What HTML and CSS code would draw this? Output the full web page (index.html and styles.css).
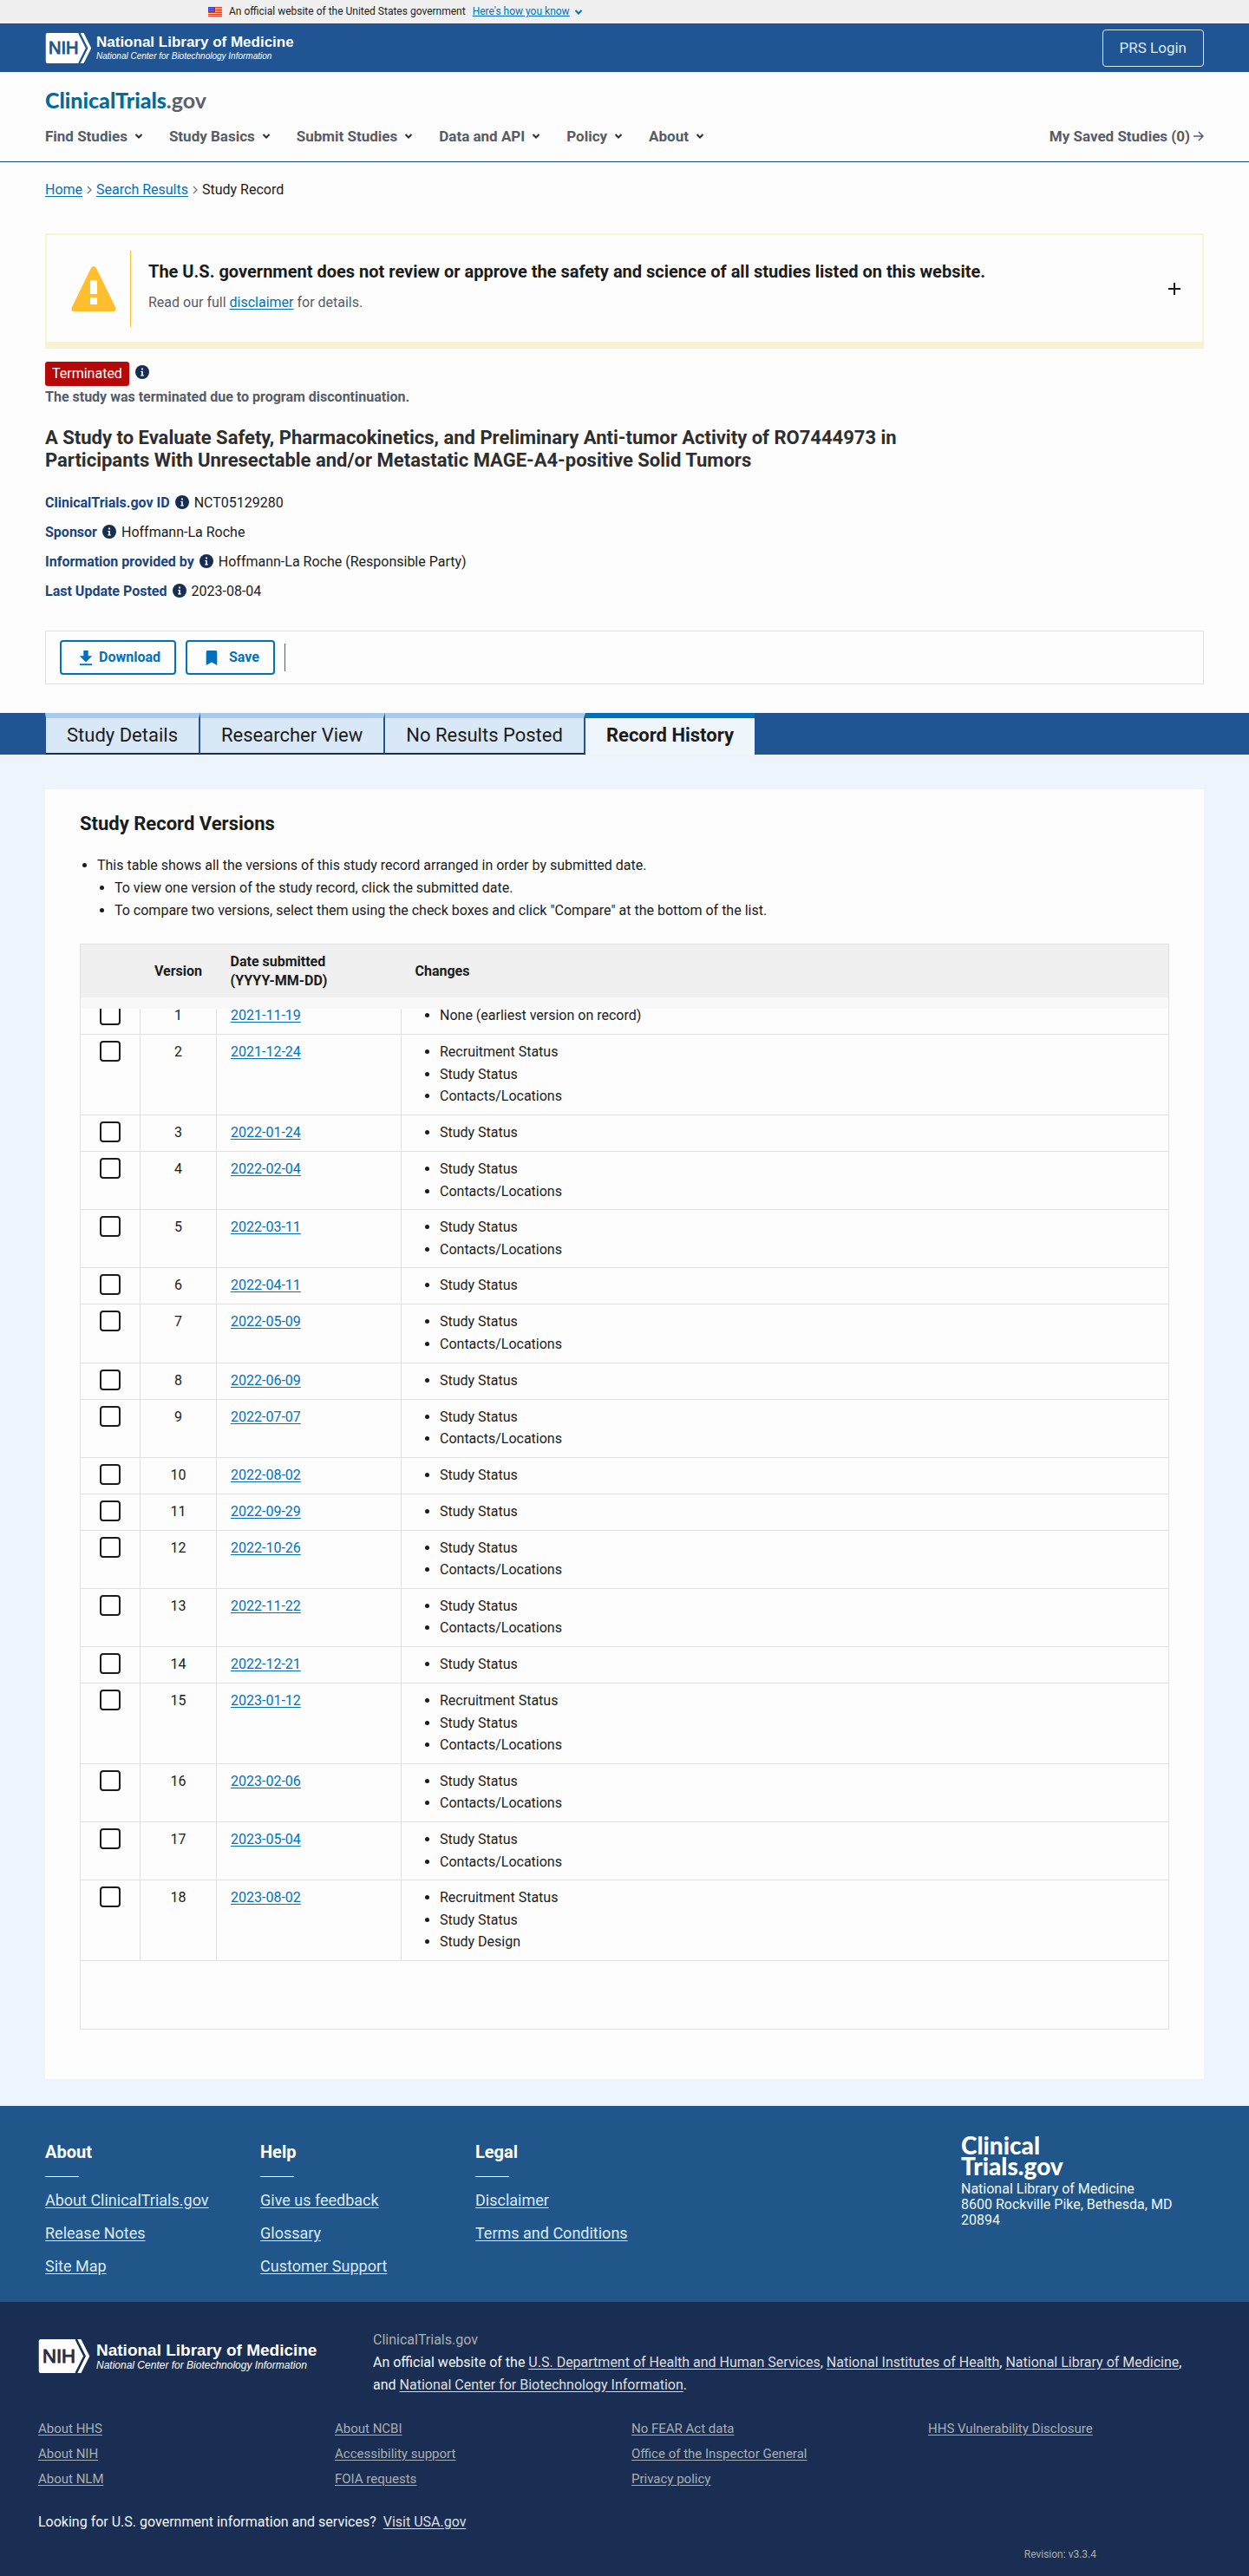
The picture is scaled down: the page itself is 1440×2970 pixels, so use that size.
FILE: index.html
```html
<!DOCTYPE html>
<html lang="en">
<head>
    <meta charset="UTF-8">
    <meta name="viewport" content="width=device-width, initial-scale=1.0">
    <title>Record History | ClinicalTrials.gov</title>
    <link rel="stylesheet" href="styles.css">
</head>
<body>
    <!-- shared icons -->
    <svg class="sprite" aria-hidden="true">
        <symbol id="chevron" viewBox="0 0 10 10"><path d="M1.5 3l3.5 3.5L8.5 3" fill="none" stroke="currentColor" stroke-width="2"/></symbol>
        <symbol id="crumb" viewBox="0 0 6 10"><path d="M1 1l4 4-4 4" fill="none" stroke="currentColor" stroke-width="1.3"/></symbol>
        <symbol id="info" viewBox="0 0 16 16"><circle cx="8" cy="8" r="8" fill="#162e51"/><path d="M6.3 7h2.5v4.3h1v1.1H6.2v-1.1h1V8.1h-.9zM7.1 3.5h1.8v1.9H7.1z" fill="#fff"/></symbol>
        <symbol id="nih" viewBox="0 0 54 36">
            <path d="M2 0h37l10 18-10 18H2a2 2 0 0 1-2-2V2a2 2 0 0 1 2-2z" fill="#fff"/>
            <path d="M41 0h4l9 18-9 18h-4l9-18z" fill="#fff"/>
            <path d="M39.5 0L48.5 18l-9 18" fill="none" stroke="currentColor" stroke-width="2"/>
        </symbol>
    </svg>

    <div class="gov-banner">
        <svg class="flag" viewBox="0 0 16 11"><path fill="#fff" d="M0 0h16v11H0z"/><path d="M0 .5h16M0 2.5h16M0 4.5h16M0 6.5h16M0 8.5h16M0 10.5h16" stroke="#db3e1f"/><path fill="#3a45c0" d="M0 0h8v6H0z"/><path d="M1 1.5h6M1 3h6M1 4.5h6" stroke="#8f96e0" stroke-width=".7" stroke-dasharray="1 1"/></svg>
        <span>An official website of the United States government</span>
        <button type="button" class="gov-banner-btn"><span>Here's how you know</span><svg class="chevron"><use href="#chevron"/></svg></button>
    </div>

    <header>
        <div class="nlm-bar">
            <a class="nlm-logo" href="#">
                <span class="nih"><svg><use href="#nih"/></svg><b>NIH</b></span>
                <span class="nlm-text"><strong>National Library of Medicine</strong><em>National Center for Biotechnology Information</em></span>
            </a>
            <a class="login" href="#">PRS Login</a>
        </div>
        <div class="site-header">
            <a class="site-logo" href="#">ClinicalTrials<span>.gov</span></a>
            <nav class="main-nav">
                <button type="button">Find Studies <svg class="chevron"><use href="#chevron"/></svg></button>
                <button type="button">Study Basics <svg class="chevron"><use href="#chevron"/></svg></button>
                <button type="button">Submit Studies <svg class="chevron"><use href="#chevron"/></svg></button>
                <button type="button">Data and API <svg class="chevron"><use href="#chevron"/></svg></button>
                <button type="button">Policy <svg class="chevron"><use href="#chevron"/></svg></button>
                <button type="button">About <svg class="chevron"><use href="#chevron"/></svg></button>
                <a class="saved" href="#">My Saved Studies (0)<svg viewBox="0 0 12 12"><path d="M0 6h11M6 1l5 5-5 5" fill="none" stroke="currentColor" stroke-width="1.5"/></svg></a>
            </nav>
        </div>
    </header>

    <div class="study-top">
        <nav class="breadcrumbs" aria-label="Breadcrumb">
            <a href="#">Home</a><svg><use href="#crumb"/></svg><a href="#">Search Results</a><svg><use href="#crumb"/></svg><span>Study Record</span>
        </nav>

        <section class="alert">
            <svg class="alert-icon" viewBox="0 0 52 52"><path d="M23 2q3-4 6 0l22 45q2 5-3 5H4q-5 0-3-5z" fill="#ffbe2e"/><path d="M22 16h8v16h-8zM22 36h8v8h-8z" fill="#fff"/></svg>
            <div class="alert-body">
                <h2>The U.S. government does not review or approve the safety and science of all studies listed on this website.</h2>
                <p>Read our full <a href="#">disclaimer</a> for details.</p>
            </div>
            <button type="button" class="expand" aria-label="Expand"><svg viewBox="0 0 14 14"><path d="M7 0v14M0 7h14" stroke="#1b1b1b" stroke-width="2"/></svg></button>
        </section>

        <div class="status"><span class="badge">Terminated</span><svg class="info"><use href="#info"/></svg></div>
        <p class="reason">The study was terminated due to program discontinuation.</p>
        <h1 class="title">A Study to Evaluate Safety, Pharmacokinetics, and Preliminary Anti-tumor Activity of RO7444973 in Participants With Unresectable and/or Metastatic MAGE-A4-positive Solid Tumors</h1>

        <dl class="meta">
            <div><dt>ClinicalTrials.gov ID</dt><dd><svg class="info"><use href="#info"/></svg>NCT05129280</dd></div>
            <div><dt>Sponsor</dt><dd><svg class="info"><use href="#info"/></svg>Hoffmann-La Roche</dd></div>
            <div><dt>Information provided by</dt><dd><svg class="info"><use href="#info"/></svg>Hoffmann-La Roche (Responsible Party)</dd></div>
            <div><dt>Last Update Posted</dt><dd><svg class="info"><use href="#info"/></svg>2023-08-04</dd></div>
        </dl>

        <div class="actions">
            <button type="button"><svg viewBox="0 0 16 20"><path d="M5 1h6v7h5l-8 8-8-8h5zM0 18h16v2H0z"/></svg>Download</button>
            <button type="button" class="save"><svg viewBox="0 0 16 20"><path d="M1 3q0-2 2-2h10q2 0 2 2v17l-7-4-7 4z"/></svg>Save</button>
            <span class="divider"></span>
        </div>
    </div>

    <nav class="tabs">
        <a href="#">Study Details</a>
        <a href="#">Researcher View</a>
        <a href="#">No Results Posted</a>
        <a href="#" class="active">Record History</a>
    </nav>

    <main>
        <section class="card">
            <h2>Study Record Versions</h2>
            <ul class="notes">
                <li>This table shows all the versions of this study record arranged in order by submitted date.
                    <ul>
                        <li>To view one version of the study record, click the submitted date.</li>
                        <li>To compare two versions, select them using the check boxes and click "Compare" at the bottom of the list.</li>
                    </ul>
                </li>
            </ul>

            <table class="versions">
                <thead>
                    <tr>
                        <th class="col-check"></th>
                        <th class="col-version">Version</th>
                        <th class="col-date">Date submitted<br>(YYYY-MM-DD)</th>
                        <th>Changes</th>
                    </tr>
                </thead>
                <tbody>
                    <tr><td><input type="checkbox" aria-label="Version 1"></td><td>1</td><td><a href="#">2021-11-19</a></td><td><ul><li>None (earliest version on record)</li></ul></td></tr>
                    <tr><td><input type="checkbox" aria-label="Version 2"></td><td>2</td><td><a href="#">2021-12-24</a></td><td><ul><li>Recruitment Status</li><li>Study Status</li><li>Contacts/Locations</li></ul></td></tr>
                    <tr><td><input type="checkbox" aria-label="Version 3"></td><td>3</td><td><a href="#">2022-01-24</a></td><td><ul><li>Study Status</li></ul></td></tr>
                    <tr><td><input type="checkbox" aria-label="Version 4"></td><td>4</td><td><a href="#">2022-02-04</a></td><td><ul><li>Study Status</li><li>Contacts/Locations</li></ul></td></tr>
                    <tr><td><input type="checkbox" aria-label="Version 5"></td><td>5</td><td><a href="#">2022-03-11</a></td><td><ul><li>Study Status</li><li>Contacts/Locations</li></ul></td></tr>
                    <tr><td><input type="checkbox" aria-label="Version 6"></td><td>6</td><td><a href="#">2022-04-11</a></td><td><ul><li>Study Status</li></ul></td></tr>
                    <tr><td><input type="checkbox" aria-label="Version 7"></td><td>7</td><td><a href="#">2022-05-09</a></td><td><ul><li>Study Status</li><li>Contacts/Locations</li></ul></td></tr>
                    <tr><td><input type="checkbox" aria-label="Version 8"></td><td>8</td><td><a href="#">2022-06-09</a></td><td><ul><li>Study Status</li></ul></td></tr>
                    <tr><td><input type="checkbox" aria-label="Version 9"></td><td>9</td><td><a href="#">2022-07-07</a></td><td><ul><li>Study Status</li><li>Contacts/Locations</li></ul></td></tr>
                    <tr><td><input type="checkbox" aria-label="Version 10"></td><td>10</td><td><a href="#">2022-08-02</a></td><td><ul><li>Study Status</li></ul></td></tr>
                    <tr><td><input type="checkbox" aria-label="Version 11"></td><td>11</td><td><a href="#">2022-09-29</a></td><td><ul><li>Study Status</li></ul></td></tr>
                    <tr><td><input type="checkbox" aria-label="Version 12"></td><td>12</td><td><a href="#">2022-10-26</a></td><td><ul><li>Study Status</li><li>Contacts/Locations</li></ul></td></tr>
                    <tr><td><input type="checkbox" aria-label="Version 13"></td><td>13</td><td><a href="#">2022-11-22</a></td><td><ul><li>Study Status</li><li>Contacts/Locations</li></ul></td></tr>
                    <tr><td><input type="checkbox" aria-label="Version 14"></td><td>14</td><td><a href="#">2022-12-21</a></td><td><ul><li>Study Status</li></ul></td></tr>
                    <tr><td><input type="checkbox" aria-label="Version 15"></td><td>15</td><td><a href="#">2023-01-12</a></td><td><ul><li>Recruitment Status</li><li>Study Status</li><li>Contacts/Locations</li></ul></td></tr>
                    <tr><td><input type="checkbox" aria-label="Version 16"></td><td>16</td><td><a href="#">2023-02-06</a></td><td><ul><li>Study Status</li><li>Contacts/Locations</li></ul></td></tr>
                    <tr><td><input type="checkbox" aria-label="Version 17"></td><td>17</td><td><a href="#">2023-05-04</a></td><td><ul><li>Study Status</li><li>Contacts/Locations</li></ul></td></tr>
                    <tr><td><input type="checkbox" aria-label="Version 18"></td><td>18</td><td><a href="#">2023-08-02</a></td><td><ul><li>Recruitment Status</li><li>Study Status</li><li>Study Design</li></ul></td></tr>
                </tbody>
                <tfoot>
                    <tr><td colspan="4"></td></tr>
                </tfoot>
            </table>
        </section>
    </main>

    <footer>
        <div class="footer-main">
            <div class="footer-cols">
                <div>
                    <h3>About</h3>
                    <a href="#">About ClinicalTrials.gov</a>
                    <a href="#">Release Notes</a>
                    <a href="#">Site Map</a>
                </div>
                <div>
                    <h3>Help</h3>
                    <a href="#">Give us feedback</a>
                    <a href="#">Glossary</a>
                    <a href="#">Customer Support</a>
                </div>
                <div>
                    <h3>Legal</h3>
                    <a href="#">Disclaimer</a>
                    <a href="#">Terms and Conditions</a>
                </div>
            </div>
            <address>
                <strong>Clinical<br>Trials.gov</strong>
                National Library of Medicine<br>8600 Rockville Pike, Bethesda, MD 20894
            </address>
        </div>

        <div class="footer-id">
            <div class="identity">
                <a class="nlm-logo large" href="#">
                    <span class="nih"><svg><use href="#nih"/></svg><b>NIH</b></span>
                    <span class="nlm-text"><strong>National Library of Medicine</strong><em>National Center for Biotechnology Information</em></span>
                </a>
                <div class="identity-text">
                    <p class="domain">ClinicalTrials.gov</p>
                    <p>An official website of the <a href="#">U.S. Department of Health and Human Services</a>, <a href="#">National Institutes of Health</a>, <a href="#">National Library of Medicine</a>, and <a href="#">National Center for Biotechnology Information</a>.</p>
                </div>
            </div>
            <div class="required-links">
                <a href="#">About HHS</a>
                <a href="#">About NCBI</a>
                <a href="#">No FEAR Act data</a>
                <a href="#">HHS Vulnerability Disclosure</a>
                <a href="#">About NIH</a>
                <a href="#">Accessibility support</a>
                <a href="#">Office of the Inspector General</a>
                <span></span>
                <a href="#">About NLM</a>
                <a href="#">FOIA requests</a>
                <a href="#">Privacy policy</a>
            </div>
            <p class="usa">Looking for U.S. government information and services? <a href="#">Visit USA.gov</a></p>
            <p class="revision">Revision: v3.3.4</p>
        </div>
    </footer>
</body>
</html>
```
FILE: styles.css
```css
* {
    box-sizing: border-box;
}

body {
    margin: 0;
    font-family: Roboto, 'Liberation Sans', sans-serif;
    font-size: 16px;
    line-height: 1.6;
    color: #1b1b1b;
    background: #fdfdfd;
}

h1, h2, h3, p, ul, dl, dd {
    margin: 0;
    padding: 0;
}

ul {
    list-style: disc;
}

a {
    color: #0071bc;
    text-underline-offset: 2px;
}

button {
    padding: 0;
    border: none;
    background: none;
    font: inherit;
    color: inherit;
    cursor: pointer;
}

svg {
    flex: none;
}

.sprite {
    display: none;
}

.chevron {
    width: 10px;
    height: 10px;
}

.info {
    width: 16px;
    height: 16px;
}

/* top banner */
.gov-banner {
    display: flex;
    align-items: center;
    gap: 8px;
    height: 27px;
    padding: 0 240px;
    background: #f0f0f0;
    font-size: 12px;
}

.flag {
    width: 16px;
    height: 11px;
}

.gov-banner-btn {
    display: flex;
    align-items: center;
    gap: 5px;
    color: #0071bc;
}

.gov-banner-btn span {
    text-decoration: underline;
}

/* header */
.nlm-bar {
    display: flex;
    justify-content: space-between;
    align-items: center;
    height: 56px;
    padding: 0 52px;
    background: #205493;
}

.nlm-logo {
    display: flex;
    align-items: center;
    gap: 5px;
    color: #fff;
    text-decoration: none;
    font-family: 'Liberation Sans', Arial, sans-serif;
}

.nih {
    display: grid;
    align-items: center;
    color: #205493;
}

.nih svg, .nih b {
    grid-area: 1 / 1;
}

.nih svg {
    width: 54px;
    height: 35px;
}

.nih b {
    padding-left: 4px;
    font-size: 20px;
    font-weight: normal;
    line-height: 1;
    -webkit-text-stroke: 1px;
}

.nlm-text {
    display: flex;
    flex-direction: column;
}

.nlm-text strong {
    font-size: 17px;
    line-height: 18px;
}

.nlm-text em {
    font-size: 10px;
    line-height: 13px;
}

.login {
    padding: 8px 19px;
    border: 1px solid #dcebf9;
    border-radius: 4px;
    font-size: 17px;
    line-height: 25px;
    color: #dcebf9;
    text-decoration: none;
}

.site-header {
    padding: 16px 52px 15px;
    border-bottom: 1px solid #1b4a73;
}

.site-logo {
    display: inline-block;
    font-family: Lato, sans-serif;
    font-size: 25px;
    font-weight: 900;
    line-height: 32px;
    color: #046b99;
    text-decoration: none;
}

.site-logo span {
    font-weight: 700;
    color: #5b616b;
}

.main-nav {
    display: flex;
    gap: 30px;
    margin-top: 11px;
    color: #565c65;
    font-size: 17px;
    font-weight: 700;
}

.main-nav button {
    display: flex;
    align-items: center;
    gap: 8px;
}

.main-nav .chevron {
    color: #2e2e2e;
}

.saved {
    display: flex;
    align-items: center;
    gap: 4px;
    margin-left: auto;
    color: #565c65;
    text-decoration: none;
}

.saved svg {
    width: 12px;
    height: 12px;
}

/* study summary */
.study-top {
    padding: 19px 52px 33px;
}

.breadcrumbs {
    display: flex;
    align-items: center;
    gap: 5px;
}

.breadcrumbs svg {
    width: 6px;
    height: 10px;
    color: #71767a;
}

.alert {
    display: flex;
    align-items: center;
    height: 133px;
    margin: 38px 0 15px;
    padding: 0 25px 0 28px;
    border: 2px solid #f8f5d0;
    border-bottom: 8px solid #f6f2d2;
}

.alert-icon {
    width: 52px;
    height: 52px;
}

.alert-body {
    flex: 1;
    height: 88px;
    margin-left: 16px;
    padding: 8px 0 0 20px;
    border-left: 1px solid #ffbe2e;
}

.alert-body h2 {
    font-size: 20px;
}

.alert-body p {
    margin-top: 7px;
    color: #565c65;
}

.expand svg {
    display: block;
    width: 14px;
    height: 14px;
}

.status {
    display: flex;
    gap: 7px;
}

.status .info {
    margin-top: 4px;
}

.badge {
    padding: 0 8px;
    border-radius: 3px;
    background: #b50909;
    line-height: 28px;
    color: #fff;
}

.reason {
    font-weight: 700;
    color: #565c65;
}

.title {
    max-width: 1000px;
    margin: 21px 0 23px;
    font-size: 22px;
    line-height: 26px;
    color: #2e2e2e;
}

.meta {
    display: flex;
    flex-direction: column;
    gap: 8px;
}

.meta div {
    display: flex;
    gap: 6px;
    line-height: 26px;
}

.meta dt {
    font-weight: 700;
    color: #1a4480;
}

.meta dd {
    display: flex;
    gap: 6px;
}

.meta .info {
    margin-top: 4px;
}

.actions {
    display: flex;
    align-items: center;
    gap: 11px;
    height: 62px;
    margin-top: 32px;
    padding: 0 16px;
    border: 1px solid #dfe1e2;
}

.actions button {
    display: flex;
    align-items: center;
    gap: 7px;
    height: 40px;
    padding: 0 16px 0 20px;
    border: 2px solid #0071bc;
    border-radius: 4px;
    color: #0071bc;
    font-weight: 700;
}

.actions button.save {
    gap: 12px;
}

.actions svg {
    width: 16px;
    height: 18px;
    fill: #0071bc;
}

.divider {
    width: 1px;
    height: 32px;
    background: #565c65;
}

/* tabs */
.tabs {
    display: flex;
    height: 48px;
    padding: 0 52px;
    background: #205493;
}

.tabs a {
    padding: 0 24px;
    border-top: 6px solid #a9cbe9;
    border-right: 2px solid #205493;
    border-bottom: 2px solid #162e51;
    background: #d9e8f6;
    font-size: 22px;
    line-height: 40px;
    color: #1b1b1b;
    text-decoration: none;
}

.tabs a:first-child {
    border-left: 1px solid #205493;
}

.tabs .active {
    border-top-color: #0071bc;
    border-right: none;
    border-bottom: none;
    background: #eff6fb;
    font-weight: 700;
}

/* record history */
main {
    padding: 40px 52px 31px;
    background: #edf4fc;
}

.card {
    padding: 22px 40px 57px;
    background: #fdfdfd;
}

.card h2 {
    font-size: 22px;
}

.notes {
    margin: 18px 0 25px;
    line-height: 26px;
}

.notes, .notes ul {
    padding-left: 20px;
}

.versions {
    width: 100%;
    border: 1px solid #dfe1e2;
    border-collapse: collapse;
}

.versions th {
    position: relative;
    height: 62px;
    padding: 0 16px;
    background: #f0f0f0;
    line-height: 22px;
    text-align: left;
}

.versions th::after {
    content: '';
    position: absolute;
    top: 100%;
    left: 0;
    right: 0;
    height: 13px;
    background: #f8f8f8;
}

.versions .col-check {
    width: 69px;
}

.versions .col-version {
    width: 88px;
    text-align: center;
}

.versions .col-date {
    width: 213px;
}

.versions td {
    height: 42px;
    padding: 7px 16px 8px;
    border: 1px solid #dfe1e2;
    vertical-align: top;
}

.versions td:first-child, .versions td:nth-child(2) {
    text-align: center;
}

.versions ul {
    padding-left: 28px;
}

.versions input {
    appearance: none;
    display: block;
    width: 24px;
    height: 24px;
    margin: 0 auto;
    border: 2px solid #1b1b1b;
    border-radius: 4px;
    background: #fff;
}

.versions tfoot td {
    height: 79px;
}

/* footer */
.footer-main {
    display: flex;
    justify-content: space-between;
    height: 226px;
    padding: 33px 52px 0;
    background: #205689;
    color: #fff;
}

.footer-cols {
    display: grid;
    grid-template-columns: repeat(3, 248px);
}

.footer-cols h3 {
    margin-bottom: 12px;
    font-size: 20px;
    line-height: 40px;
}

.footer-cols h3::after {
    content: '';
    display: block;
    width: 39px;
    margin-top: 8px;
    border-top: 1px solid #fff;
}

.footer-cols a {
    display: block;
    margin-bottom: 8px;
    font-size: 18px;
    line-height: 30px;
    color: #dcebf9;
}

address {
    width: 280px;
    font-style: normal;
    line-height: 18px;
    color: #f0f6fc;
}

address strong {
    display: block;
    margin-bottom: 6px;
    font-family: Lato, sans-serif;
    font-size: 28px;
    font-weight: 900;
    line-height: 24px;
    color: #fff;
}

.footer-id {
    padding: 31px 44px 16px;
    background: #1a2e53;
    color: #f0f6fc;
}

.footer-id a {
    color: #dcdee0;
}

.identity {
    display: flex;
    padding-right: 20px;
}

.nlm-logo.large {
    flex: 0 0 386px;
    align-items: flex-start;
    gap: 7px;
    padding-top: 12px;
}

.footer-id .nlm-logo {
    color: #fff;
}

.large .nih {
    color: #1a2e53;
}

.large .nih svg {
    width: 60px;
    height: 39px;
}

.large .nih b {
    padding-left: 5px;
    font-size: 22px;
}

.large .nlm-text {
    padding-top: 3px;
}

.large strong {
    font-size: 19px;
    line-height: 20px;
}

.large em {
    font-size: 12px;
    line-height: 15px;
}

.identity-text {
    line-height: 26px;
}

.domain {
    color: #a9aeb1;
}

.required-links {
    display: grid;
    grid-template-columns: repeat(4, 342px);
    margin: 23px 0 22px;
    font-size: 15px;
    line-height: 29px;
}

.footer-id .required-links a {
    color: #a9aeb1;
}

.usa a {
    margin-left: 4px;
}

.revision {
    margin-top: 14px;
    padding-right: 132px;
    text-align: right;
    font-size: 12px;
    line-height: 20px;
    color: #a9aeb1;
}
```
